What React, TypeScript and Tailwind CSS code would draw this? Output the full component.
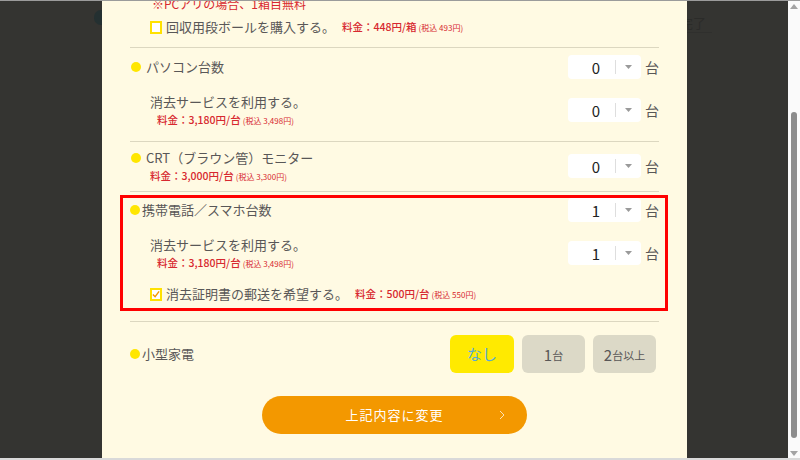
import React from "react";

const FONT = "font-['Noto_Sans_CJK_JP','Noto_Sans',sans-serif]";

function Dot({ gap = "mr-[5px] ml-[1px]" }: { gap?: string }) {
  return <span className={`inline-block w-[10px] h-[10px] rounded-full bg-[#ffe600] shrink-0 ${gap}`} />;
}

function Fee({ price, tax, unit = "台" }: { price: string; tax: string; unit?: string }) {
  return (
    <span className="h-[16px] flex items-center text-[#d7282f] whitespace-nowrap leading-none">
      <span className="text-[10.5px] font-medium">料金：{price}円/{unit}</span>
      <span className="text-[8px] ml-[2px] mt-[1px]">(税込 {tax}円)</span>
    </span>
  );
}

function Select({ value }: { value: string }) {
  return (
    <div className="flex items-center">
      <div className="w-[73px] h-[24px] bg-white rounded-[4px] flex items-center">
        <div className="w-[47px] flex justify-end pr-[15px] text-[15px] text-[#222] leading-none">{value}</div>
        <div className="w-px h-[14px] bg-[#dedede]" />
        <div className="flex-1 flex justify-center">
          <svg width="7" height="4" viewBox="0 0 7 4">
            <path d="M0 0h7L3.5 4z" fill="#9a9a9a" />
          </svg>
        </div>
      </div>
      <span className="ml-[4px] text-[14px] leading-[20px] text-[#595757]">台</span>
    </div>
  );
}

function Check({ checked }: { checked?: boolean }) {
  return (
    <span className="w-[12px] h-[13px] border-2 border-[#ffe100] bg-white shrink-0 flex items-center justify-center">
      {checked && (
        <svg width="9" height="9" viewBox="0 0 9 9">
          <path d="M1 4.5l2.5 2.5L8 1" stroke="#f39800" strokeWidth="1.6" fill="none" />
        </svg>
      )}
    </span>
  );
}

const Line = () => <div className="h-px bg-[#dcd7c0]" />;

function SubRow({ value, pl = "pl-[20px]" }: { value: string; pl?: string }) {
  return (
    <div className="h-[36px] flex items-center justify-between">
      <div className={`${pl} flex flex-col`}>
        <span className="h-[20px] text-[13px] leading-[20px]">消去サービスを利用する。</span>
        <span className="pl-[7px]"><Fee price="3,180" tax="3,498" /></span>
      </div>
      <Select value={value} />
    </div>
  );
}

export default function App() {
  return (
    <div className={`w-[800px] h-[460px] flex flex-col overflow-hidden ${FONT}`}>
      <div className="h-px bg-[#9b9b9b]" />
      <div className="flex flex-1 min-h-0">
        <div className="relative flex-1 bg-[#343431]">
          {/* page behind the overlay */}
          <div className="absolute left-[94px] top-[9px] w-[14px] h-[15px] rounded-full bg-[#243031]" />
          <div className="absolute left-[680px] top-[13px] w-[32px] text-[13px] leading-[18px] text-[#2b2b29] border-b border-[#2f2f2d]">完了</div>

          <div className="relative ml-[102px] w-[585px] h-full bg-[#fffae3] px-[28px] overflow-hidden text-[#595757]">
            {/* boxes */}
            <div className="mt-[-4px] h-[14px] pl-[22px] text-[12px] leading-[14px] text-[#d7282f]">※PCアリの場合、1箱目無料</div>
            <div className="mt-[6px] h-[20px] pl-[20px] flex items-center">
              <Check />
              <span className="ml-[4px] text-[13px] leading-[20px]">回収用段ボールを購入する。</span>
              <span className="ml-[7px]"><Fee price="448" tax="493" unit="箱" /></span>
            </div>
            <div className="mt-[10px]"><Line /></div>

            {/* PC */}
            <div className="mt-[7px] h-[24px] flex items-center justify-between">
              <div className="flex items-center text-[13px] leading-[20px]"><Dot />パソコン台数</div>
              <Select value="0" />
            </div>
            <div className="mt-[13px]"><SubRow value="0" /></div>
            <div className="mt-[13px]"><Line /></div>

            {/* CRT */}
            <div className="mt-[6px] h-[36px] flex items-center justify-between">
              <div className="flex flex-col">
                <span className="h-[20px] flex items-center text-[13px] leading-[20px]"><Dot />CRT（ブラウン管）モニター</span>
                <span className="pl-[20px]"><Fee price="3,000" tax="3,300" /></span>
              </div>
              <Select value="0" />
            </div>
            <div className="mt-[7px]"><Line /></div>

            {/* mobile (highlighted) */}
            <div className="mt-[3px] ml-[-10px] mr-[-9px] border-[3px] border-[#ff0000] pl-[7px] pr-[6px] pb-[4px]">
              <div className="h-[24px] flex items-center justify-between">
                <div className="flex items-center text-[13px] leading-[20px]"><Dot gap="mr-[2px]" />携帯電話／スマホ台数</div>
                <Select value="1" />
              </div>
              <div className="mt-[13px]"><SubRow value="1" /></div>
              <div className="mt-[13px] h-[20px] pl-[20px] flex items-center">
                <Check checked />
                <span className="ml-[4px] text-[13px] leading-[20px]">消去証明書の郵送を希望する。</span>
                <span className="ml-[7px]"><Fee price="500" tax="550" /></span>
              </div>
            </div>
            <div className="mt-[10px]"><Line /></div>

            {/* small appliances */}
            <div className="mt-[13px] h-[38px] flex items-center justify-between">
              <div className="flex items-center text-[13px] leading-[20px]"><Dot gap="mr-[2px]" />小型家電</div>
              <div className="flex gap-[8px] mr-[3px]">
                <div className="w-[64px] h-[38px] rounded-[6px] bg-[#ffea00] flex items-center justify-center text-[15px] text-[#55aad8]">なし</div>
                <div className="w-[63px] h-[38px] rounded-[6px] bg-[#dcd9c7] flex items-center justify-center leading-none">
                  <span className="text-[15px]">1</span><span className="text-[11px] mt-[2px]">台</span>
                </div>
                <div className="w-[63px] h-[38px] rounded-[6px] bg-[#dcd9c7] flex items-center justify-center leading-none">
                  <span className="text-[15px]">2</span><span className="text-[11px] mt-[2px]">台以上</span>
                </div>
              </div>
            </div>

            <div className="mt-[23px] relative w-[265px] h-[38px] mx-auto rounded-full bg-[#f39800] flex items-center justify-center text-white text-[13px] tracking-[1px]">
              上記内容に変更
              <svg className="absolute right-[22px] top-[14px]" width="6" height="10" viewBox="0 0 6 10">
                <path d="M1 1l4 4-4 4" stroke="#fde2b5" strokeWidth="1" fill="none" />
              </svg>
            </div>
          </div>
        </div>

        {/* scrollbar */}
        <div className="w-[12px] bg-[#fafafa] flex flex-col items-center">
          <svg className="mt-[3px]" width="8" height="5" viewBox="0 0 8 5"><path d="M0 5h8L4 0z" fill="#a3a3a3" /></svg>
          <div className="mt-[103px] w-[6px] h-[326px] rounded-full bg-[#8c8c8c]" />
          <svg className="mt-auto mb-[2px]" width="8" height="5" viewBox="0 0 8 5"><path d="M0 0h8L4 5z" fill="#a3a3a3" /></svg>
        </div>
      </div>
      <div className="h-[2px] bg-[#d9d9d9]" />
    </div>
  );
}
